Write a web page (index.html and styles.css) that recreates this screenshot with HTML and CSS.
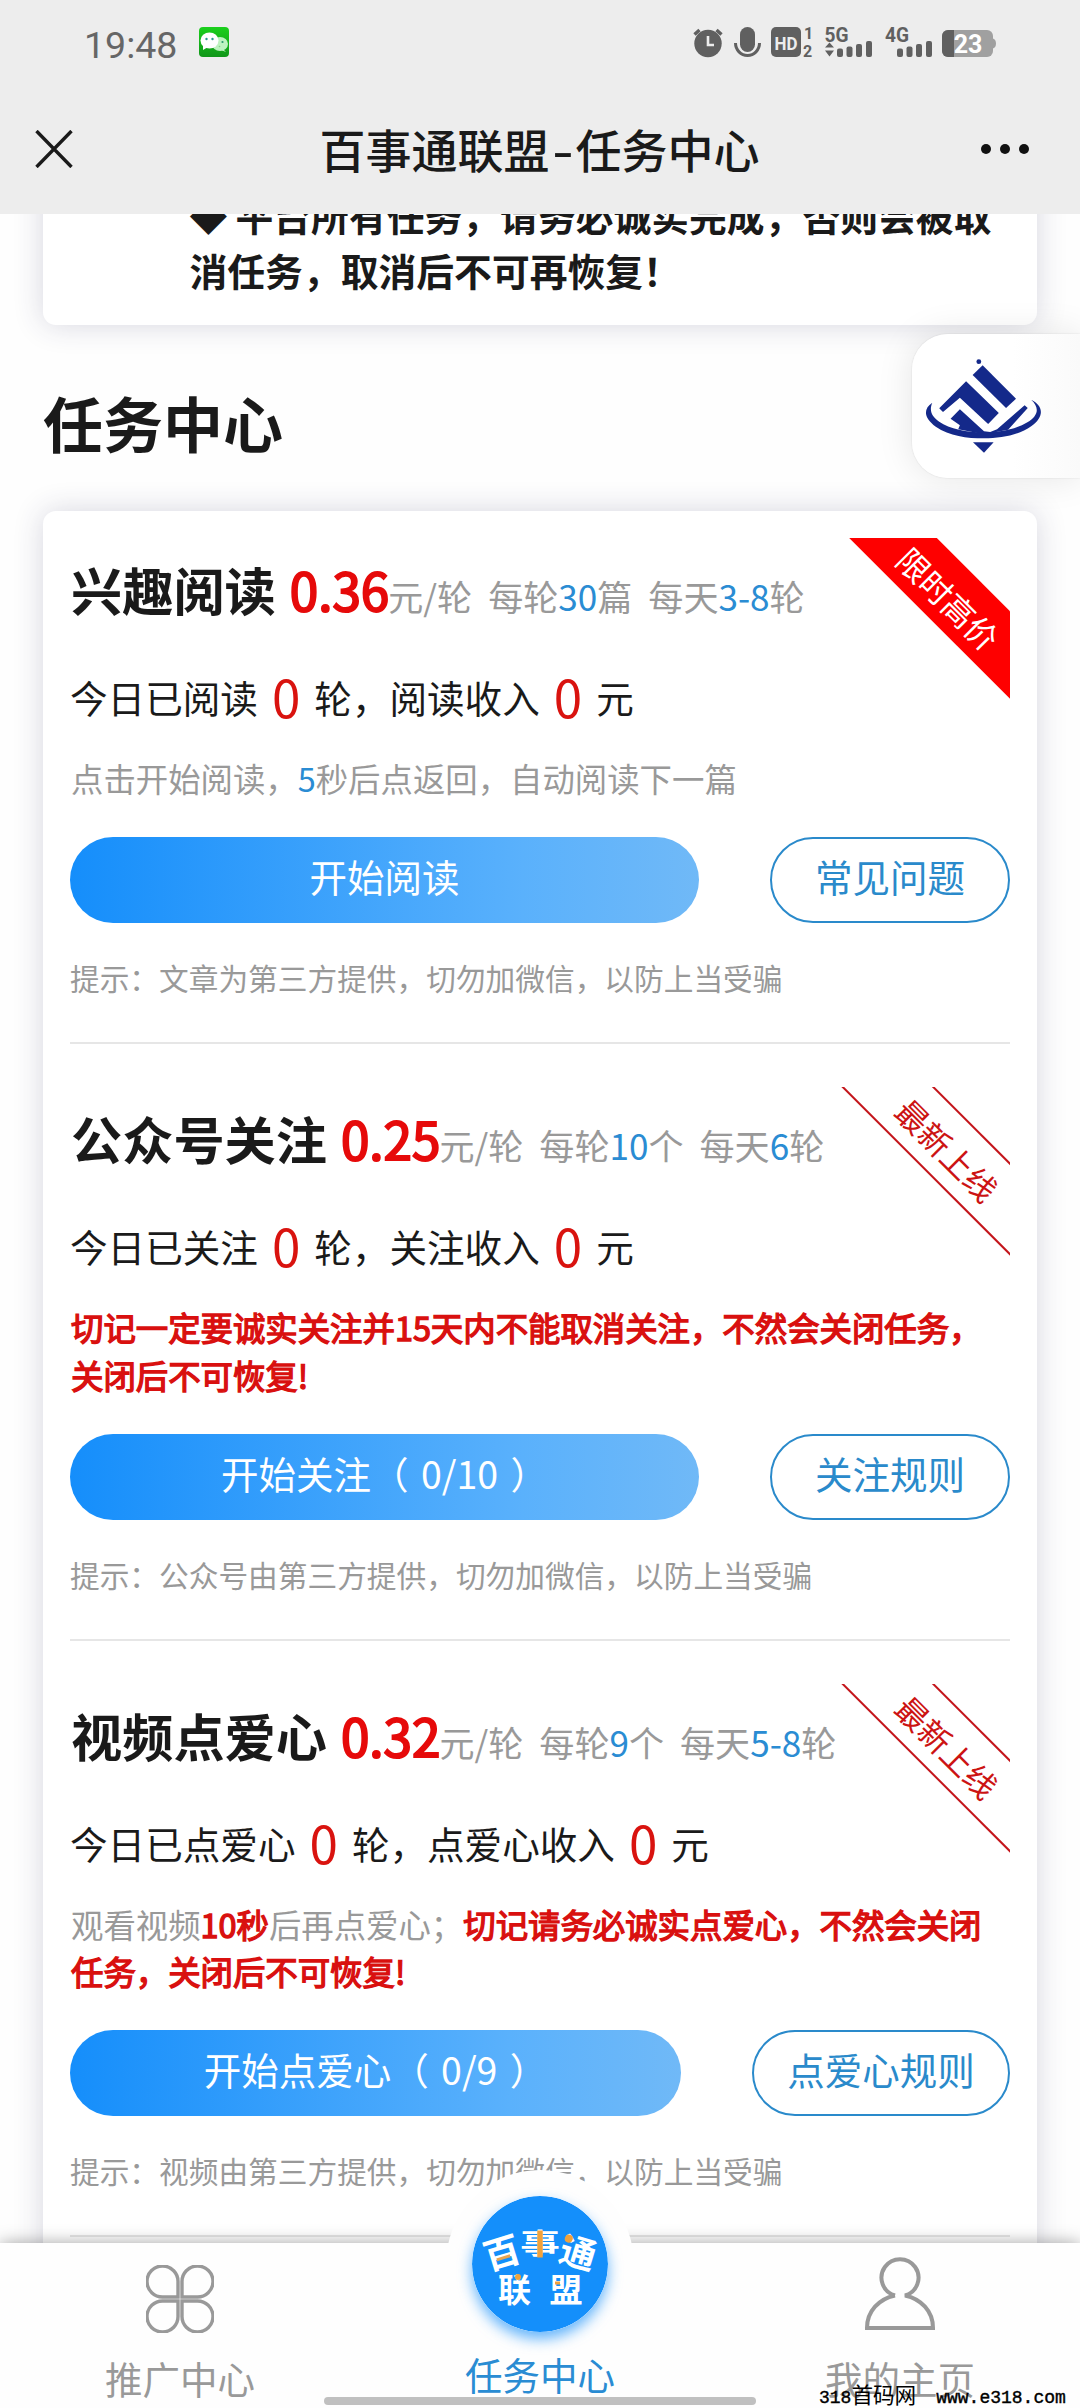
FILE: index.html
```html
<!DOCTYPE html>
<html lang="zh-CN">
<head>
<meta charset="utf-8">
<title>百事通联盟-任务中心</title>
<link rel="stylesheet" href="styles.css">
</head>
<body>
<div class="screen">
  <header class="top">
    <div class="status">
      <span class="clock">19:48</span>
      <svg class="wechat" viewBox="0 0 30 30">
        <defs><linearGradient id="wg" x1="0" y1="0" x2="0" y2="1"><stop offset="0" stop-color="#1bd01c"/><stop offset="1" stop-color="#109619"/></linearGradient></defs>
        <rect width="30" height="30" rx="4" fill="url(#wg)"/>
        <ellipse cx="21" cy="17" rx="8" ry="7" fill="#bdf3bf"/><path d="M24 22l3 3-5-2z" fill="#bdf3bf"/>
        <ellipse cx="10.500" cy="13.500" rx="9" ry="8" fill="#fff"/><path d="M4 18l0 5 5-3z" fill="#fff"/>
        <circle cx="7.500" cy="12" r="1.200" fill="#2a9a8c"/><circle cx="13.500" cy="12" r="1.200" fill="#2a9a8c"/>
        <circle cx="23.500" cy="15" r="1.100" fill="#2a9a6c"/><circle cx="20.500" cy="19.500" r=".8" fill="#8bd08c"/>
      </svg>
      <svg class="indicators" viewBox="690 24 310 36" fill="#606060">
        <circle cx="708" cy="43.500" r="13.700"/><path d="M708 36v9h6" fill="none" stroke="#ededed" stroke-width="2.600"/>
        <path d="M694.500 34.500l5-4.500M721.500 34.500l-5-4.500" stroke="#606060" stroke-width="3.400"/>
        <rect x="740" y="27" width="15" height="25" rx="7.500"/><path d="M735.500 43a12 12.500 0 0 0 24 0" fill="none" stroke="#606060" stroke-width="3"/>
        <rect x="771" y="27" width="30" height="30" rx="5"/>
        <text x="786" y="49.500" class="hd" text-anchor="middle" textLength="23" lengthAdjust="spacingAndGlyphs">HD</text>
        <text x="804" y="38.500" class="tiny">1</text><text x="803" y="57" class="tiny">2</text>
        <text x="824.500" y="41.500" class="net" textLength="24" lengthAdjust="spacingAndGlyphs">5G</text>
        <path d="M825 47.500l4.500-5 4.500 5zM825 50.500l4.500 6 4.500-6z"/>
        <rect x="837" y="48.500" width="6" height="8.500" rx="2"/><rect x="846.500" y="46.500" width="6" height="10.500" rx="2"/><rect x="856" y="44" width="6" height="13" rx="2"/><rect x="866" y="41" width="6" height="16" rx="2"/>
        <text x="885" y="41.500" class="net" textLength="24" lengthAdjust="spacingAndGlyphs">4G</text>
        <rect x="897" y="48.500" width="6" height="8.500" rx="2"/><rect x="906.500" y="46.500" width="6" height="10.500" rx="2"/><rect x="916" y="44" width="6" height="13" rx="2"/><rect x="926" y="41" width="6" height="16" rx="2"/>
        <rect x="942" y="30" width="51" height="27" rx="6" fill="#a0a0a0"/><path d="M993 38.500q3 1 3 5t-3 5z" fill="#a0a0a0"/>
        <path d="M948 30h6v27h-6a6 6 0 0 1-6-6V36a6 6 0 0 1 6-6z"/>
        <text x="968" y="53" class="bat" text-anchor="middle">23</text>
      </svg>
    </div>
    <div class="titlebar">
      <svg class="close" viewBox="0 0 38 38"><path d="M1.500 1l35 36M36.500 1l-35 36" stroke="#1a1a1a" stroke-width="3.400"/></svg>
      <h1>百事通联盟<i>-</i>任务中心</h1>
      <svg class="more" viewBox="0 0 50 12"><circle cx="6" cy="6" r="5"/><circle cx="25" cy="6" r="5"/><circle cx="44" cy="6" r="5"/></svg>
    </div>
  </header>

  <main class="page">
    <section class="card notice"><p><span class="mark">◆</span>平台所有任务，请务必诚实完成，否则会被取<br>消任务，取消后不可再恢复！</p></section>
    <h2>任务中心</h2>
    <section class="card tasks">
      <article class="task">
        <div class="ribbon"><span class="solid">限时高价</span></div>
        <h3>兴趣阅读<b>0.36</b><small>元/轮<em>每轮<i>30</i>篇</em><em>每天<i>3-8</i>轮</em></small></h3>
        <p class="stats">今日已阅读<b>0</b>轮，阅读收入<b>0</b>元</p>
        <p class="hint">点击开始阅读，<i>5</i>秒后点返回，自动阅读下一篇</p>
        <div class="actions"><button class="go">开始阅读</button><button class="rule">常见问题</button></div>
        <p class="tip">提示：文章为第三方提供，切勿加微信，以防上当受骗</p>
      </article>
      <article class="task">
        <div class="ribbon"><span class="outline">最新上线</span></div>
        <h3>公众号关注<b>0.25</b><small>元/轮<em>每轮<i>10</i>个</em><em>每天<i>6</i>轮</em></small></h3>
        <p class="stats">今日已关注<b>0</b>轮，关注收入<b>0</b>元</p>
        <p class="hint"><b>切记一定要诚实关注并15天内不能取消关注，不然会关闭任务，<br>关闭后不可恢复!</b></p>
        <div class="actions"><button class="go">开始关注（ 0/10 ）</button><button class="rule">关注规则</button></div>
        <p class="tip">提示：公众号由第三方提供，切勿加微信，以防上当受骗</p>
      </article>
      <article class="task">
        <div class="ribbon"><span class="outline">最新上线</span></div>
        <h3>视频点爱心<b>0.32</b><small>元/轮<em>每轮<i>9</i>个</em><em>每天<i>5-8</i>轮</em></small></h3>
        <p class="stats">今日已点爱心<b>0</b>轮，点爱心收入<b>0</b>元</p>
        <p class="hint">观看视频<b>10秒</b>后再点爱心；<b>切记请务必诚实点爱心，不然会关闭<br>任务，关闭后不可恢复!</b></p>
        <div class="actions"><button class="go">开始点爱心（ 0/9 ）</button><button class="rule long">点爱心规则</button></div>
        <p class="tip">提示：视频由第三方提供，切勿加微信，以防上当受骗</p>
      </article>
    </section>
  </main>

  <aside class="float">
    <svg viewBox="1110 140 360 300" preserveAspectRatio="none" fill="#14298a">
      <circle cx="1275" cy="154" r="7"/>
      <path d="M1286 165l97 100-29 28-97-99z"/>
      <path d="M1238 213l95 95-31 33-82-79-49 43-11-11z"/>
      <path d="M1220 297l70 66 18 2 20-8 80-72 9 8-57 65-70 14-75-15 5-12-27-20z"/>
      <path d="M1140 277C1112 296 1116 324 1150 349 1190 377 1240 384 1290 384 1340 384 1392 374 1427 348 1467 318 1462 286 1427 268 1452 292 1448 316 1416 336 1380 358 1335 366 1290 366 1240 366 1190 356 1160 334 1138 318 1130 300 1140 277z"/>
      <path d="M1258 396h60l-28 31z"/>
    </svg>
  </aside>

  <nav class="tabs">
    <a class="tab">
      <svg class="clover" viewBox="0 0 68 68" fill="none" stroke="#999" stroke-width="3.400"><path d="M32 32H17A15.500 15.500 0 1 1 32 17zM36 32V17A15.500 15.500 0 1 1 51 32zM32 36V51A15.500 15.500 0 1 1 17 36zM36 36H51A15.500 15.500 0 1 1 36 51z"/></svg>
      <span>推广中心</span>
    </a>
    <a class="tab active">
      <svg class="badge" viewBox="0 0 136 136">
        <circle cx="68" cy="68" r="68" fill="#148ffb"/>
        <g class="logo" text-anchor="middle">
          <g transform="translate(30 57) rotate(-17)"><text y="13" font-size="36">百</text><path d="M-7 5H7" stroke="#e8a550" stroke-width="3"/></g>
          <g transform="translate(68 48) scale(1.100 .8)"><text y="13" font-size="36">事</text><path d="M0-17V17" stroke="#f0a23c" stroke-width="5"/></g>
          <g transform="translate(106 57) rotate(17)"><text y="13" font-size="36">通</text><circle cx="-13" cy="-11" r="4" fill="#f0a23c"/></g>
          <text x="42.500" y="105.500" font-size="33">联</text><circle cx="46" cy="81" r="3" fill="#f0a23c"/>
          <text x="94" y="105.500" font-size="33">盟</text><path d="M83 87h5" stroke="#f0a23c" stroke-width="3"/>
        </g>
      </svg>
      <span>任务中心</span>
    </a>
    <a class="tab">
      <svg class="person" viewBox="0 0 72 74" fill="none" stroke="#999" stroke-width="4"><path d="M31 38.500A18.500 18.500 0 1 1 41 38.500C57 42 69 54 69 71H3C3 54 15 42 31 38.500"/></svg>
      <span>我的主页</span>
    </a>
  </nav>
  <div class="home-bar"></div>
  <div class="watermark"><span>318</span>首码网<span class="url">www.e318.com</span></div>
</div>
</body>
</html>
```

FILE: styles.css
```css
* { box-sizing: border-box; margin: 0; padding: 0; }
body { background: #fff; font-family: "Noto Sans CJK SC", sans-serif; color: #1a1a1a; }
i, em { font-style: normal; }
.screen { position: relative; display: flex; flex-direction: column; width: 1080px; height: 2408px; overflow: hidden; background: #fefefe; }

.top { position: relative; height: 214px; flex: none; background: #ededed; }
.status { display: flex; align-items: center; height: 84px; padding-left: 84px; }
.clock { width: 115px; font: 37.5px/44px Roboto, sans-serif; color: #666; padding-top: 6px; }
.wechat { width: 30px; height: 30px; }
.indicators { width: 310px; height: 36px; margin-left: 461px; }
.indicators text { font-family: Roboto, sans-serif; font-weight: 700; }
.hd { font-size: 19px; fill: #ededed; }
.tiny { font-size: 16px; }
.net { font-size: 20px; }
.bat { font-size: 25px; fill: #fff; }
.titlebar { display: flex; align-items: center; justify-content: space-between; height: 130px; padding: 0 50px 0 35px; }
.close { width: 38px; height: 38px; }
.more { width: 50px; height: 12px; fill: #111; }
h1 { font-size: 46px; font-weight: 500; line-height: 60px; margin-left: 26px; padding-bottom: 2px; }
h1 i { display: inline-block; width: 26px; text-align: center; transform: scaleX(1.3); }

.page { flex: 1; min-height: 0; overflow: hidden; padding: 0 43px; }
.card { background: #fff; border-radius: 13px; box-shadow: 0 0 30px rgba(40, 40, 90, .19); }
.notice { height: 171px; margin-top: -60px; padding: 33px 0 0 146.500px; }
.notice p { font-size: 37.8px; font-weight: 700; line-height: 55px; white-space: nowrap; }
.mark { display: inline-block; width: 46px; }
h2 { margin: 57px 0 49px; font-size: 60px; line-height: 80px; }
.tasks { padding: 27px; height: 2000px; }

.task { position: relative; margin-bottom: 43px; border-bottom: 2px solid #e6e6e6; }
h3 { height: 100px; font-size: 51.2px; line-height: 103px; white-space: nowrap; padding-left: 1px; }
h3 b { margin: 0 -1px 0 14px; font-weight: 400; color: #e60a0a; -webkit-text-stroke: 2px #e60a0a; }
small { font-size: 35.1px; font-weight: 400; color: #999; }
small em { margin-left: 16px; }
small i, .hint i { color: #2a8cd3; }
.stats { height: 116px; font-size: 37.6px; line-height: 118px; white-space: nowrap; }
.stats b { margin: 0 14px; font-size: 51.2px; font-weight: 400; line-height: 1; vertical-align: -5px; color: #d9130f; }
.hint { font-size: 32.4px; line-height: 47.5px; color: #999; white-space: nowrap; padding-left: 1px; }
.hint b { font-weight: 400; color: #d9100f; -webkit-text-stroke: 1.4px #d9100f; }
.actions { display: flex; justify-content: space-between; margin-top: 35.5px; gap: 71px; }
.actions button { height: 86px; border-radius: 43px; font: 37.5px/78px "Noto Sans CJK SC", sans-serif; padding-bottom: 8px; white-space: pre; word-spacing: 4px; }
.go { flex: 1; border: 0; color: #fff; background: linear-gradient(90deg, #158efb, #5ab1fc 72%, #70b9f7); }
.rule { width: 240px; border: 2px solid #2a8acb; color: #2a8acb; background: #fff; }
.actions .rule { line-height: 74px; }
.rule.long { width: 258px; }
.tip { margin: 31px 0 41px; font-size: 29.7px; line-height: 47px; color: #999; }

.ribbon { position: absolute; top: 0; right: 0; width: 170px; height: 170px; overflow: hidden; font-size: 32px; text-align: center; }
.ribbon span { position: absolute; width: 240px; transform: rotate(45deg); }
.ribbon .solid { left: -9px; top: 27px; height: 62px; line-height: 68px; background: #fe0000; color: #fff; }
.ribbon .outline { left: -11px; top: 28px; height: 66px; line-height: 66px; border: solid #c4151b; border-width: 2px 0; color: #cc1313; }

.float { position: absolute; top: 334px; right: 0; width: 168px; height: 144px; padding: 23px 0 0 10px; border-radius: 36px 0 0 36px; background: linear-gradient(90deg, #fff 60%, #fafafa); box-shadow: 0 0 36px rgba(0, 0, 0, .1), 0 0 2px rgba(0, 0, 0, .12); }
.float svg { width: 124px; height: 100px; }

.tabs { position: absolute; left: 0; right: 0; bottom: 0; height: 165px; display: flex; background: #fefefe; box-shadow: 0 0 16px rgba(0, 0, 0, .36); }
.tab { position: relative; flex: 1; display: flex; flex-direction: column; align-items: center; font-size: 37.5px; line-height: 50px; color: #999; }
.tab span { margin-top: auto; padding-bottom: 5px; }
.tab.active { color: #2a8cd3; }
.tab.active span { position: relative; padding-bottom: 9px; }
.tab.active::before { content: ""; position: absolute; top: -73px; width: 188px; height: 188px; border-radius: 50%; background: #fefefe; }
.badge { position: absolute; top: -47px; width: 136px; height: 136px; border-radius: 50%; box-shadow: 0 7px 14px rgba(20, 143, 251, .65); }
.logo { fill: #fff; font-family: "Noto Sans CJK SC", sans-serif; font-weight: 700; }
.clover { width: 68px; height: 68px; margin-top: 22px; }
.person { width: 72px; height: 74px; margin-top: 14px; }
.home-bar { position: absolute; left: 324px; bottom: 3px; width: 432px; height: 8px; border-radius: 4px; background: #c0c0c0; }
.watermark { position: absolute; left: 819px; bottom: -5px; font: 21.6px/30px "Liberation Mono", "Noto Sans CJK SC", monospace; color: #000; white-space: nowrap; }
.watermark span { font-size: 18px; -webkit-text-stroke: .4px #000; }
.watermark .url { margin-left: 20px; }
```
